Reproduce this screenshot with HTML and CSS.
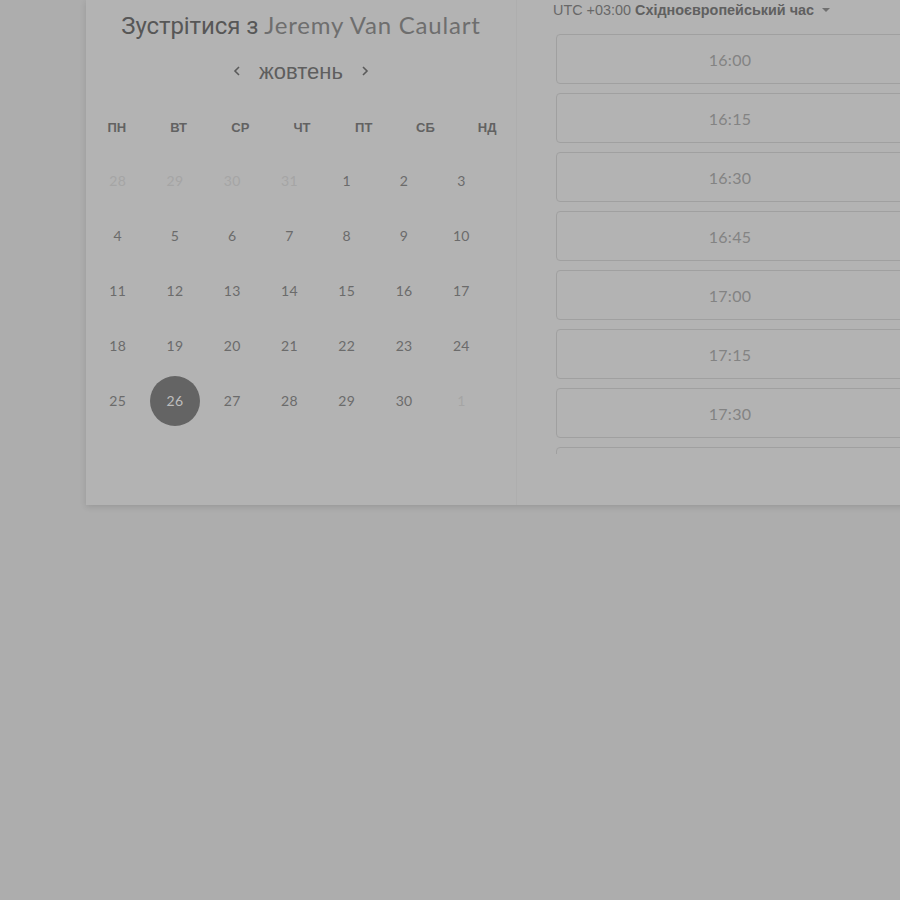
FILE: index.html
```html
<!DOCTYPE html>
<html lang="uk">
<head>
<meta charset="utf-8">
<title>Зустрітися з Jeremy Van Caulart</title>
<link rel="stylesheet" href="styles.css">
</head>
<body>
<div class="modal">
  <section class="cal">
    <h1 class="title"><span class="lead">Зустрітися з</span> <span class="name">Jeremy Van Caulart</span></h1>
    <div class="month">
      <button class="nav" aria-label="prev"><svg width="10" height="12" viewBox="0 0 10 12"><path d="M7 2 L3 6 L7 10" fill="none" stroke="#5a5a5a" stroke-width="1.6"/></svg></button>
      <span class="mname">жовтень</span>
      <button class="nav" aria-label="next"><svg width="10" height="12" viewBox="0 0 10 12"><path d="M3 2 L7 6 L3 10" fill="none" stroke="#5a5a5a" stroke-width="1.6"/></svg></button>
    </div>
    <div class="weekdays">
      <span>ПН</span><span>ВТ</span><span>СР</span><span>ЧТ</span><span>ПТ</span><span>СБ</span><span>НД</span>
    </div>
    <div class="days">
      <span class="off">28</span><span class="off">29</span><span class="off">30</span><span class="off">31</span><span>1</span><span>2</span><span>3</span>
      <span>4</span><span>5</span><span>6</span><span>7</span><span>8</span><span>9</span><span>10</span>
      <span>11</span><span>12</span><span>13</span><span>14</span><span>15</span><span>16</span><span>17</span>
      <span>18</span><span>19</span><span>20</span><span>21</span><span>22</span><span>23</span><span>24</span>
      <span>25</span><span class="sel"><b>26</b></span><span>27</span><span>28</span><span>29</span><span>30</span><span class="off">1</span>
    </div>
  </section>
  <section class="times">
    <div class="tz">UTC +03:00 <strong>Східноєвропейський час</strong><i class="caret"></i></div>
    <div class="slots">
      <div class="slot">16:00</div>
      <div class="slot">16:15</div>
      <div class="slot">16:30</div>
      <div class="slot">16:45</div>
      <div class="slot">17:00</div>
      <div class="slot">17:15</div>
      <div class="slot">17:30</div>
      <div class="slot" aria-label="17:45"></div>
    </div>
  </section>
</div>
</body>
</html>
```
FILE: styles.css
```css
html, body {
  margin: 0;
  padding: 0;
  background: #adadad;
  overflow: hidden;
  width: 900px;
  height: 900px;
}
.modal {
  margin-left: 86px;
  width: 870px;
  height: 505px;
  display: flex;
  background: #b3b3b3;
  box-shadow: 0 2px 6px rgba(0,0,0,0.12);
}
.cal {
  width: 430px;
  flex: none;
  display: flex;
  flex-direction: column;
}
.title {
  margin: 8px 0 0;
  text-align: center;
  font-weight: normal;
  font-size: 24px;
  line-height: 34px;
  font-family: "Roboto", "Liberation Sans", sans-serif;
  white-space: nowrap;
}
.title .lead { color: #575757; letter-spacing: -0.1px; }
.title .name {
  color: #6e6e6e;
  font-family: "Lato", "Liberation Sans", sans-serif;
  letter-spacing: 0.8px;
}
.month {
  margin-top: 15px;
  height: 28px;
  display: flex;
  align-items: center;
  justify-content: center;
  gap: 17px;
}
.mname {
  font-family: "Liberation Sans", "Roboto", sans-serif;
  font-size: 22px;
  color: #5e5e5e;
  line-height: 28px;
}
.nav {
  border: 0;
  background: none;
  padding: 0;
  width: 10px;
  height: 12px;
  display: flex;
  margin-top: -3px;
}
.weekdays {
  margin-top: 27px;
  display: grid;
  grid-template-columns: repeat(7, 1fr);
  height: 28px;
  align-items: center;
  width: 432px;
}
.weekdays span {
  text-align: center;
  font-family: "Liberation Sans", sans-serif;
  font-weight: bold;
  font-size: 13px;
  color: #626262;
}
.days {
  margin: 12px 0 0 3px;
  width: 401px;
  display: grid;
  grid-template-columns: repeat(7, 1fr);
  grid-auto-rows: 55px;
}
.days span {
  display: flex;
  align-items: center;
  justify-content: center;
  font-family: "Lato", "Liberation Sans", sans-serif;
  font-size: 14px;
  color: #6b6b6b;
  letter-spacing: 0.3px;
}
.days span.off { color: #a5a5a5; }
.days span.sel b {
  width: 50px;
  height: 50px;
  border-radius: 50%;
  background: #646464;
  color: #bdbdbd;
  font-weight: normal;
  display: flex;
  align-items: center;
  justify-content: center;
  margin-top: 0;
}
.times {
  flex: 1;
  border-left: 1px solid #aeaeae;
  display: flex;
  flex-direction: column;
  padding-left: 36px;
}
.tz {
  font-family: "Liberation Sans", sans-serif;
  font-size: 14.4px;
  color: #686868;
  line-height: 20px;
  display: flex;
  align-items: center;
  white-space: pre;
}
.tz strong { color: #606060; }
.caret {
  display: inline-block;
  width: 0;
  height: 0;
  border-left: 4px solid transparent;
  border-right: 4px solid transparent;
  border-top: 4px solid #707070;
  margin-left: 8px;
}
.slots {
  margin-top: 14px;
  margin-left: 3px;
  height: 420px;
  overflow: hidden;
  display: flex;
  flex-direction: column;
  gap: 9px;
}
.slot {
  flex: none;
  width: 346px;
  height: 48px;
  border: 1px solid #a0a0a0;
  border-radius: 4px;
  display: flex;
  align-items: center;
  justify-content: center;
  font-family: "Lato", "Liberation Sans", sans-serif;
  font-size: 16px;
  color: #838383;
  letter-spacing: 0.3px;
}
```
